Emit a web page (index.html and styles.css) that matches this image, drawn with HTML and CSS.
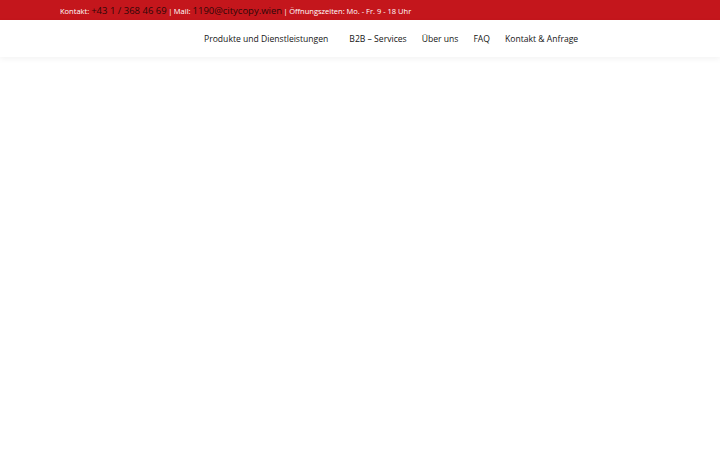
FILE: index.html
```html
<!DOCTYPE html>
<html lang="de">
<head>
<meta charset="utf-8">
<title>City Copy</title>
<link rel="stylesheet" href="styles.css">
</head>
<body>
<div class="topbar">
  <div class="topbar-inner">
    <span class="label">Kontakt:</span>
    <a class="link" href="#">+43 1 / 368 46 69</a>
    <span class="sep">|</span>
    <span class="label">Mail:</span>
    <a class="link" href="#">1190@citycopy.wien</a>
    <span class="sep">|</span>
    <span class="label">Öffnungszeiten: Mo. - Fr. 9 - 18 Uhr</span>
  </div>
</div>
<header class="header">
  <nav class="nav">
    <a href="#" class="nav-item first">Produkte und Dienstleistungen</a>
    <a href="#" class="nav-item">B2B – Services</a>
    <a href="#" class="nav-item">Über uns</a>
    <a href="#" class="nav-item">FAQ</a>
    <a href="#" class="nav-item">Kontakt &amp; Anfrage</a>
  </nav>
</header>
<main class="main"></main>
</body>
</html>
```
FILE: styles.css
```css
* { box-sizing: border-box; }
html, body { margin: 0; padding: 0; background: #fff; }
body { font-family: "Open Sans", "DejaVu Sans", sans-serif; color: #222; }
.topbar {
  background: #c4161c;
  height: 20px;
  display: flex;
  align-items: center;
}
.topbar-inner {
  padding-left: 60px;
  display: flex;
  align-items: baseline;
  font-size: 7.5px;
  color: #fff;
  white-space: nowrap;
}
.label { margin-right: 2px; }
.link {
  color: #2e0808;
  text-decoration: none;
  font-size: 9.5px;
}
.sep { margin: 0 1.5px; }
.header {
  height: 37px;
  background: #fff;
  box-shadow: 0 2px 6px rgba(0,0,0,0.05);
  display: flex;
  align-items: center;
}
.nav {
  padding-left: 204px;
  display: flex;
  gap: 15px;
  font-size: 8.6px;
}
.nav-item { color: #141414; text-decoration: none; }
.nav-item.first { margin-right: 6px; }
.main { height: 393px; }
```
